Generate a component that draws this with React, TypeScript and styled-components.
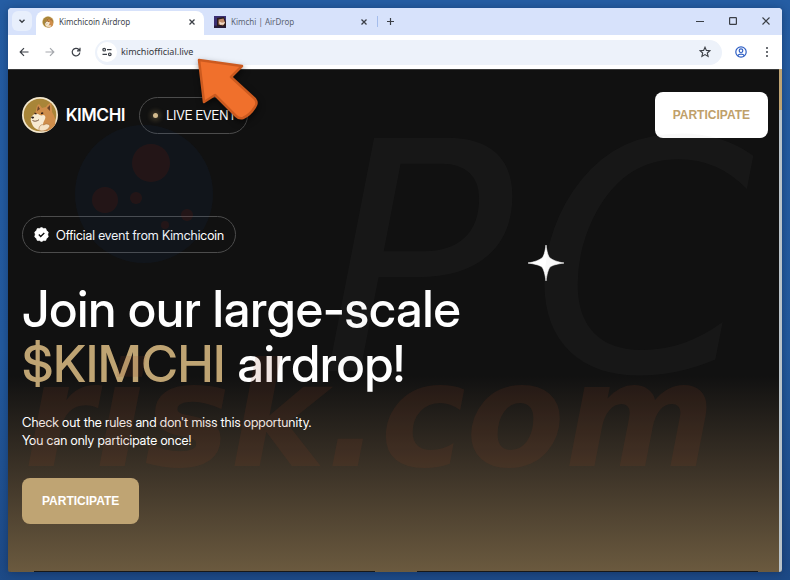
import React from "react";
import styled, { createGlobalStyle } from "styled-components";

const GlobalStyle = createGlobalStyle`
  * { box-sizing: border-box; }
  html, body, #root { height: 100%; margin: 0; }
  button, input { font: inherit; }
`;

const Desktop = styled.div`
  display: flex;
  min-height: 100%;
  padding: 8px;
  background: linear-gradient(180deg, #255da3, #235a9e 60%, #1d4a86);
  font-family: "Noto Sans", sans-serif;
`;

const BrowserWindow = styled.div`
  position: relative;
  display: flex;
  flex: 1;
  flex-direction: column;
  min-width: 0;
  overflow: hidden;
  border-radius: 4px 4px 3px 3px;
  background: #fff;
  box-shadow: 0 1px 8px rgba(8, 28, 62, 0.45);
`;

const TabStrip = styled.div`
  display: flex;
  align-items: flex-end;
  height: 27px;
  background: #d7e2fb;
`;

const IconButton = styled.button<{ $width?: number; $tone?: string }>`
  display: flex;
  align-items: center;
  justify-content: center;
  flex: none;
  width: ${(p) => p.$width ?? 26}px;
  height: 24px;
  padding: 0;
  border: 0;
  background: none;
  color: ${(p) => p.$tone ?? "#3b3f46"};
  svg { display: block; fill: none; stroke: currentColor; }
`;

const StripButton = styled(IconButton)`
  height: 28px;
`;

const TabSearch = styled(IconButton)`
  height: 20px;
  margin: 0 4px 4px;
  border-radius: 6px;
  background: #e8effc;
`;

const Tab = styled.div<{ $active?: boolean; $width: number }>`
  display: flex;
  align-items: center;
  gap: 5px;
  width: ${(p) => p.$width}px;
  height: 24px;
  padding: 0 0 2px ${(p) => (p.$active ? 6 : 10)}px;
  border-radius: 8px 8px 0 0;
  background: ${(p) => (p.$active ? "#fff" : "transparent")};
  color: ${(p) => (p.$active ? "#42464d" : "#5b6473")};
  font-family: "Noto Sans", sans-serif;
  font-size: 8px;
  line-height: 12px;
  svg { flex: none; }
  & > span { flex: 1; white-space: nowrap; }
`;

const TabDivider = styled.div`
  width: 1px;
  height: 11px;
  margin-bottom: 8px;
  background: #a5bdec;
`;

const WindowControls = styled.div`
  display: flex;
  margin-left: auto;
`;

const Toolbar = styled.div`
  display: flex;
  align-items: center;
  height: 34px;
  padding: 0 2px 0 3px;
`;

const AddressBar = styled.label`
  display: flex;
  align-items: center;
  flex: 1;
  height: 25px;
  margin: 0 6px;
  padding: 0 4px 0 2px;
  border-radius: 13px;
  background: #edf2fa;
`;

const SiteInfo = styled.span`
  display: flex;
  align-items: center;
  justify-content: center;
  width: 20px;
  height: 20px;
  border-radius: 50%;
  background: #fff;
`;

const AddressInput = styled.input`
  flex: 1;
  min-width: 0;
  padding: 0 0 0 4px;
  border: 0;
  outline: 0;
  background: none;
  color: #34373c;
  font-size: 9px;
  line-height: 14px;
`;

const Viewport = styled.div`
  position: relative;
  display: flex;
  flex: 1;
  background: #111;
`;

const Page = styled.main`
  position: relative;
  display: flex;
  flex: 1;
  flex-direction: column;
  min-width: 0;
  overflow: hidden;
  border-top: 1px solid #3a3a3a;
  background: linear-gradient(180deg, #111 0%, #111 61%, #3a3126 79%, #6b5a3f 100%);
  color: #fff;
  font-family: "Inter Display", Inter, sans-serif;
`;

const PageHeader = styled.header`
  display: flex;
  align-items: center;
  padding: 22px 11px 0 14px;
`;

const Brand = styled.a`
  display: flex;
  align-items: center;
  gap: 8px;
  color: #fff;
  font-size: 17px;
  font-weight: 600;
  line-height: 24px;
  text-decoration: none;
  svg { display: block; }
`;

const Pill = styled.div`
  display: flex;
  align-items: center;
  gap: 7px;
  width: fit-content;
  height: 37px;
  padding: 0 11px;
  border: 1px solid #4c4c4c;
  border-radius: 19px;
  font-size: 13px;
  line-height: 18px;
  white-space: nowrap;
`;

const LivePill = styled(Pill)`
  margin-left: 14px;
`;

const LiveDot = styled.span`
  width: 5px;
  height: 5px;
  margin: 0 1px 0 2px;
  border-radius: 50%;
  background: #d3bb8e;
  box-shadow: 0 0 4px 3px rgba(192, 162, 110, 0.22);
`;

const ActionButton = styled.button<{ $light?: boolean }>`
  height: 46px;
  padding: 0 18px;
  border: 0;
  border-radius: 8px;
  background: ${(p) => (p.$light ? "#fff" : "#bfa473")};
  color: ${(p) => (p.$light ? "#bfa06a" : "#fff")};
  font-family: "Liberation Sans", Arial, sans-serif;
  font-size: 12px;
  font-weight: 700;
  line-height: 16px;
`;

const HeaderAction = styled(ActionButton)`
  margin-left: auto;
`;

const HeroAction = styled(ActionButton)`
  padding: 0 20px;
`;

const Hero = styled.section`
  display: flex;
  flex-direction: column;
  align-items: flex-start;
  padding: 78px 14px 0;
`;

const Title = styled.h1`
  margin: 29px 0 0;
  font-size: 50px;
  font-weight: 500;
  line-height: 55px;
  white-space: nowrap;
  span { color: #bfa473; }
`;

const Lead = styled.p`
  margin: 21px 0 29px;
  font-size: 13px;
  line-height: 18px;
`;

const NextCards = styled.div`
  display: grid;
  grid-template-columns: 1fr 1fr;
  gap: 42px;
  height: 1px;
  margin: auto 21px 0 26px;
  & > span { background: #181818; }
`;

const Scrollbar = styled.div`
  width: 3px;
  background: #b9c3c9;
  &::before { content: ""; display: block; height: 41px; background: #bfa473; }
`;

const Spark = styled.svg`
  position: absolute;
  left: 519px;
  top: 174px;
`;

const Watermark = styled.div`
  position: absolute;
  inset: 0;
  overflow: hidden;
  pointer-events: none;
  font-family: "DejaVu Sans", sans-serif;
  font-style: italic;
  white-space: nowrap;
`;

const Globe = styled.svg`
  position: absolute;
  left: 66px;
  top: 54px;
`;

const Initials = styled.span`
  position: absolute;
  left: 312px;
  top: 30px;
  display: flex;
  gap: 18px;
  color: rgba(140, 140, 140, 0.05);
  font-size: 320px;
  line-height: 320px;
`;

const Domain = styled.span`
  position: absolute;
  left: 16px;
  top: 274px;
  color: rgba(140, 65, 35, 0.14);
  font-size: 144px;
  font-weight: 700;
  line-height: 144px;
`;

const Pointer = styled.svg`
  position: absolute;
  left: 180px;
  top: 44px;
  filter: drop-shadow(1px 3px 3px rgba(0, 0, 0, 0.5));
  pointer-events: none;
`;

const CloseIcon = () => (
  <svg width="8" height="8" viewBox="0 0 8 8" strokeWidth="1.3"><path d="M1.5 1.5l5 5M6.5 1.5l-5 5" /></svg>
);

const DogeCoin = ({ size }: { size: number }) => (
  <svg width={size} height={size} viewBox="0 0 36 36">
    <circle cx="18" cy="18" r="18" fill="#f3e7cd" />
    <circle cx="18" cy="18" r="16.3" fill="#a88538" />
    <path d="M10 27c-1-3 0-7 2-10l2-3c0-3 1-6 3-7 1 1 2 3 3 4l4-1c1-2 3-4 5-4 1 3 1 6 1 9 3 4 4 9 3 13-2 3-5 5-8 6-5 1-10-2-15-7z" fill="#cf8d4a" />
    <path d="M16 9l2 3-3 2zM28 8l-3 3 3 3z" fill="#6d4529" />
    <path d="M9 21c1-3 4-5 7-4 2 1 3 2 5 1 2 0 3 2 2 4-2 4-3 6-1 11-5 1-9-1-11-4-1-3-3-5-2-8z" fill="#f7ead2" />
    <path d="M9 20.500c1-1.300 2.500-1.300 3.200 0-.5 1.500-2.500 1.500-3.200 0z" fill="#2b211c" />
    <path d="M10.500 23.500c2 1.200 4.500.8 6.500-.8" fill="none" stroke="#65442f" strokeWidth=".9" />
    <path d="M12.500 16.300l2 .6M19 16.500l2.200-.4" stroke="#352219" strokeWidth="1.500" />
    <path d="M17 31c1-3 3-4 5-3 2-2 5-1 6 1l-2 3c-3 2-6 2.500-9 1.500z" fill="#f5e2c5" stroke="#a87643" strokeWidth=".6" />
  </svg>
);

const DogeAvatar = () => (
  <svg width="12" height="12" viewBox="0 0 12 12">
    <path d="M0 0h12v12H0z" fill="#3b2f73" />
    <path d="M3 2l7-1 2 5v5H3z" fill="#2b1a1c" />
    <path d="M4.500 3.500l5-1 1.500 4-2 3-4.500-1z" fill="#c08a68" />
    <path d="M5 5.500l3 1.300 3-.8-1 2.500-4 .3z" fill="#f0dbc9" />
    <path d="M0 9.500l12 1V12H0z" fill="#271c38" />
  </svg>
);

export default function App() {
  return (
    <>
      <GlobalStyle />
      <Desktop>
        <BrowserWindow>
          <TabStrip>
            <TabSearch $width={20} aria-label="Search tabs">
              <svg width="8" height="8" viewBox="0 0 8 8" strokeWidth="1.4"><path d="M1.500 2.700L4 5.200l2.500-2.500" /></svg>
            </TabSearch>
            <Tab $active $width={168}>
              <DogeCoin size={12} />
              <span>Kimchicoin Airdrop</span>
              <IconButton $width={24} aria-label="Close Kimchicoin Airdrop"><CloseIcon /></IconButton>
            </Tab>
            <Tab $width={173}>
              <DogeAvatar />
              <span>Kimchi | AirDrop</span>
              <IconButton $width={26} aria-label="Close Kimchi AirDrop"><CloseIcon /></IconButton>
            </Tab>
            <TabDivider />
            <StripButton $width={24} aria-label="New tab">
              <svg width="9" height="9" viewBox="0 0 9 9" strokeWidth="1.200"><path d="M4.500 1v7M1 4.500h7" /></svg>
            </StripButton>
            <WindowControls>
              <StripButton $width={33} aria-label="Minimize">
                <svg width="8" height="8" viewBox="0 0 8 8"><path d="M0 4.500h8" /></svg>
              </StripButton>
              <StripButton $width={33} aria-label="Maximize">
                <svg width="8" height="8" viewBox="0 0 8 8"><rect x=".6" y=".6" width="6.800" height="6.800" rx=".6" strokeWidth="1.200" /></svg>
              </StripButton>
              <StripButton $width={33} aria-label="Close window">
                <svg width="8" height="8" viewBox="0 0 8 8" strokeWidth="1.100"><path d="M.5.5l7 7M7.500.5l-7 7" /></svg>
              </StripButton>
            </WindowControls>
          </TabStrip>

          <Toolbar>
            <IconButton aria-label="Back">
              <svg width="10" height="10" viewBox="0 0 10 10" strokeWidth="1.200"><path d="M9.500 5h-8M5 1.200L1.200 5 5 8.800" /></svg>
            </IconButton>
            <IconButton $tone="#a5a8ad" aria-label="Forward">
              <svg width="10" height="10" viewBox="0 0 10 10" strokeWidth="1.200"><path d="M.5 5h8M5 1.200L8.800 5 5 8.800" /></svg>
            </IconButton>
            <IconButton aria-label="Reload">
              <svg width="10" height="10" viewBox="0 0 10 10" strokeWidth="1.200"><path d="M8.800 5.500A3.800 3.800 0 1 1 7.800 2.500L8.800 3.600M9 .8v3H6" /></svg>
            </IconButton>
            <AddressBar>
              <SiteInfo>
                <svg width="10" height="10" viewBox="0 0 10 10" fill="none" stroke="#3b3f46" strokeWidth="1.200">
                  <circle cx="2.200" cy="2.700" r="1.300" /><path d="M5 2.700h4.500M.5 7.300H5" /><circle cx="7.800" cy="7.300" r="1.300" />
                </svg>
              </SiteInfo>
              <AddressInput aria-label="Address" defaultValue="kimchiofficial.live" />
              <IconButton aria-label="Bookmark">
                <svg width="12" height="12" viewBox="0 0 12 12" strokeWidth="1.100"><path d="M6 1.200l1.400 3.200 3.500.3-2.600 2.300.8 3.400L6 8.600l-3.100 1.800.8-3.400L1.100 4.700l3.500-.3z" /></svg>
              </IconButton>
            </AddressBar>
            <IconButton $tone="#2f5fc4" aria-label="Profile">
              <svg width="12" height="12" viewBox="0 0 12 12" strokeWidth="1.200"><circle cx="6" cy="6" r="5.200" /><circle cx="6" cy="4.700" r="1.800" /><path d="M2.500 9.800c1.500-2.200 5.500-2.200 7 0" /></svg>
            </IconButton>
            <IconButton aria-label="Menu">
              <svg width="4" height="12" viewBox="0 0 4 12"><g fill="#3b3f46" stroke="none"><circle cx="2" cy="2" r="1" /><circle cx="2" cy="6" r="1" /><circle cx="2" cy="10" r="1" /></g></svg>
            </IconButton>
          </Toolbar>

          <Viewport>
            <Page>
              <PageHeader>
                <Brand href="#"><DogeCoin size={36} />KIMCHI</Brand>
                <LivePill><LiveDot />LIVE EVENT</LivePill>
                <HeaderAction $light>PARTICIPATE</HeaderAction>
              </PageHeader>
              <Hero>
                <Pill>
                  <svg width="15" height="15" viewBox="0 0 15 15">
                    <path d="M7.500.3l1.900 1.100 2.300.1.900 2.100 1.700 1.500-.5 2.400.5 2.400-1.700 1.500-.9 2.100-2.300.1-1.900 1.100-1.900-1.100-2.300-.1-.9-2.100L.7 9.900l.5-2.400-.5-2.400 1.700-1.500.9-2.100 2.300-.1z" fill="#fff" stroke="#fff" strokeWidth=".6" strokeLinejoin="round" />
                    <path d="M4.800 7.600l1.900 1.900 3.600-3.400" fill="none" stroke="#111" strokeWidth="1.400" />
                  </svg>
                  Official event from Kimchicoin
                </Pill>
                <Title>Join our large-scale<br /><span>$KIMCHI</span> airdrop!</Title>
                <Lead>Check out the rules and don't miss this opportunity.<br />You can only participate once!</Lead>
                <HeroAction>PARTICIPATE</HeroAction>
              </Hero>
              <NextCards><span /><span /></NextCards>
              <Spark width="38" height="38" viewBox="0 0 38 38">
                <path d="M19 1c1 7 2 11 4 13 3 2 7 4 14 5-7 1-11 2-14 4-2 3-3 7-4 14-1-7-2-11-4-14-3-2-7-3-14-4 7-1 11-3 14-5 2-2 3-6 4-13z" fill="#fff" stroke="#fff" strokeWidth=".6" />
              </Spark>
              <Watermark aria-hidden="true">
                <Globe width="140" height="140" viewBox="0 0 140 140">
                  <circle cx="70" cy="70" r="69" fill="#1c4e9a" opacity=".08" />
                  <g fill="#a01800" opacity=".13"><circle cx="77" cy="39" r="19" /><circle cx="31" cy="76" r="13" /><circle cx="62" cy="74" r="6" /><circle cx="113" cy="91" r="6" /><circle cx="91" cy="101" r="4" /></g>
                </Globe>
                <Initials><span>P</span><span>C</span></Initials>
                <Domain>risk.com</Domain>
              </Watermark>
            </Page>
            <Scrollbar />
          </Viewport>

          <Pointer width="80" height="80" viewBox="0 0 80 80">
            <path d="M11 8l43 6-11 11 24 22q3 4 0 8-5 8-12 11-4 1-7-2L27 43 16 50z" fill="#f0702c" stroke="#cc5a1f" strokeWidth="2.500" strokeLinejoin="round" />
          </Pointer>
        </BrowserWindow>
      </Desktop>
    </>
  );
}
